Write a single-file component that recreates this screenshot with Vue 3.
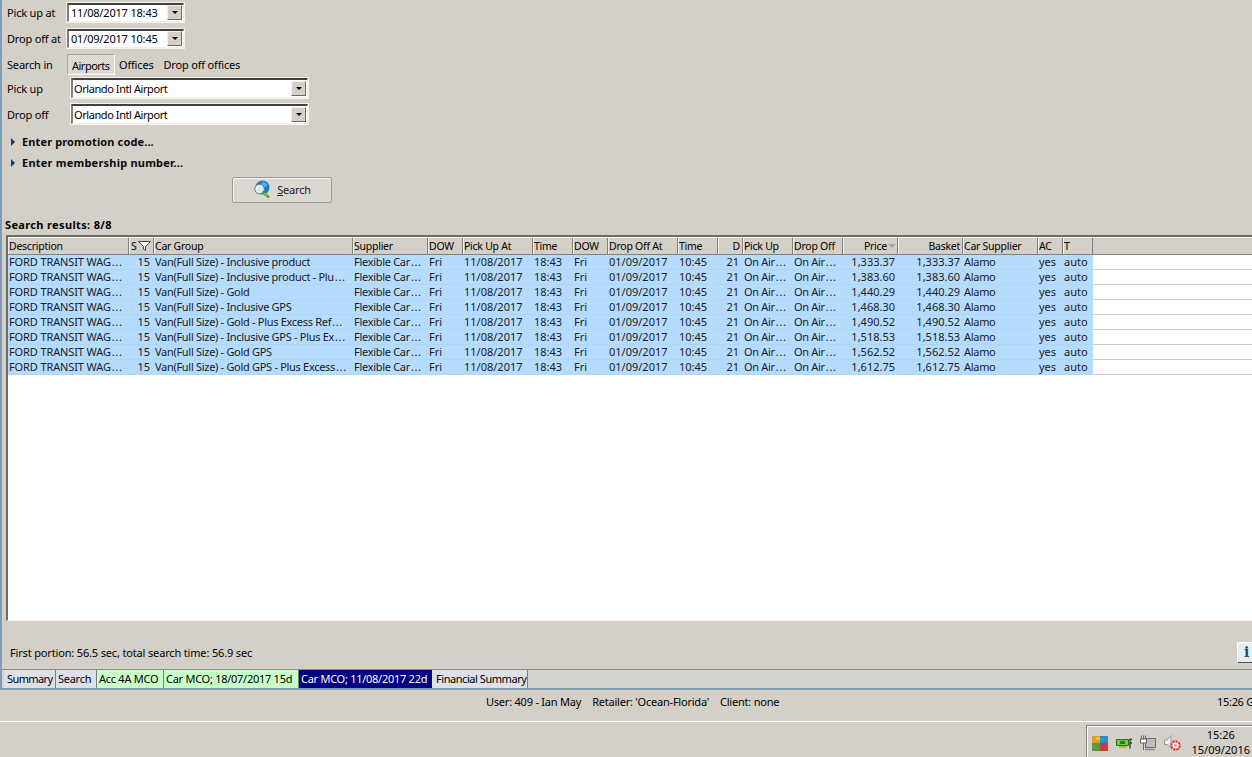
<script setup>
const columns = [
  { name: 'Description', width: 121, first: true },
  { name: 'S', width: 25, right: true, wide: true, filter: true },
  { name: 'Car Group', width: 199, tight: true },
  { name: 'Supplier', width: 75, tight: true },
  { name: 'DOW', width: 35 },
  { name: 'Pick Up At', width: 70 },
  { name: 'Time', width: 40 },
  { name: 'DOW', width: 35 },
  { name: 'Drop Off At', width: 70 },
  { name: 'Time', width: 40 },
  { name: 'D', width: 25, right: true, wide: true },
  { name: 'Pick Up', width: 50, tight: true },
  { name: 'Drop Off', width: 50, tight: true },
  { name: 'Price', width: 55, right: true, sort: true },
  { name: 'Basket', width: 65, right: true },
  { name: 'Car Supplier', width: 75, tight: true },
  { name: 'AC', width: 25 },
  { name: 'T', width: 30 }
]
const gridTemplate = columns.map(c => c.width + 'px').join(' ')
const rowData = [
  ['Inclusive product', '1,333.37'],
  ['Inclusive product - Plu…', '1,383.60'],
  ['Gold', '1,440.29'],
  ['Inclusive GPS', '1,468.30'],
  ['Gold - Plus Excess Ref…', '1,490.52'],
  ['Inclusive GPS - Plus Ex…', '1,518.53'],
  ['Gold GPS', '1,562.52'],
  ['Gold GPS - Plus Excess…', '1,612.75']
]
const rows = rowData.map(([group, price]) => [
  'FORD TRANSIT WAG…', '15', 'Van(Full Size) - ' + group, 'Flexible Car…', 'Fri', '11/08/2017', '18:43',
  'Fri', '01/09/2017', '10:45', '21', 'On Air…', 'On Air…', price, price, 'Alamo', 'yes', 'auto'
])
const tabs = [
  { label: 'Summary', kind: 'plain', width: 52 },
  { label: 'Search', kind: 'plain', width: 41 },
  { label: 'Acc 4A MCO', kind: 'green', width: 67 },
  { label: 'Car MCO; 18/07/2017 15d', kind: 'green', width: 135 },
  { label: 'Car MCO; 11/08/2017 22d', kind: 'active', width: 133 },
  { label: 'Financial Summary', kind: 'plain', width: 96 }
]
</script>

<template>
  <div class="screen">
    <div class="window">
      <div class="form">
        <div class="form-row date-row first">
          <span class="label">Pick up at</span>
          <div class="field date"><span>11/08/2017 18:43</span><i class="arrow-btn"></i></div>
        </div>
        <div class="form-row date-row">
          <span class="label">Drop off at</span>
          <div class="field date"><span>01/09/2017 10:45</span><i class="arrow-btn"></i></div>
        </div>
        <div class="form-row search-in">
          <span class="label">Search in</span>
          <span class="seg on">Airports</span>
          <span class="seg">Offices</span>
          <span class="seg">Drop off offices</span>
        </div>
        <div class="form-row combo-row">
          <span class="label short">Pick up</span>
          <div class="field combo"><span>Orlando Intl Airport</span><i class="arrow-btn"></i></div>
        </div>
        <div class="form-row combo-row">
          <span class="label short">Drop off</span>
          <div class="field combo"><span>Orlando Intl Airport</span><i class="arrow-btn"></i></div>
        </div>
        <div class="expander e1"><i class="tri"></i>Enter promotion code...</div>
        <div class="expander e2"><i class="tri"></i>Enter membership number...</div>
        <button class="search-btn">
          <svg width="18" height="18" viewBox="0 0 18 18">
            <circle cx="9.5" cy="7.5" r="7" fill="#1c7cc6" />
            <path d="M9 1.5c2 1 4 .5 5 2.5s-1 3-3 3-2-3-2-5.5z" fill="#55aee0" />
            <circle cx="6.5" cy="9" r="4.8" fill="#d4edf6" stroke="#4f7f9f" />
            <path d="M3.5 9a3 3 0 0 1 3-3" stroke="#fff" fill="none" />
            <path d="M10.5 12.5l4.5 4" stroke="#4f9a2c" stroke-width="2.8" stroke-linecap="round" />
            <path d="M11.5 13l3 3" stroke="#e8d04a" stroke-width="1" />
          </svg>
          <span><u>S</u>earch</span>
        </button>
      </div>

      <div class="results-title">Search results: 8/8</div>

      <div class="table">
        <div class="thead" :style="{ gridTemplateColumns: gridTemplate }">
          <div v-for="(c, i) in columns" :key="i" class="th" :class="{ right: c.right && !c.filter, wide: c.wide }">
            <span>{{ c.name }}</span>
            <svg v-if="c.filter" class="funnel" width="13" height="10" viewBox="0 0 13 10">
              <path d="M.5.5h12L7.5 5.5v4l-2-1.5V5.5z" fill="#fff" stroke="#444" />
            </svg>
            <i v-if="c.sort" class="sort"></i>
          </div>
        </div>
        <div class="tbody">
          <div v-for="(r, ri) in rows" :key="ri" class="row">
            <div class="cells" :style="{ gridTemplateColumns: gridTemplate }">
              <div
                v-for="(v, ci) in r"
                :key="ci"
                class="td"
                :class="{ right: columns[ci].right, wide: columns[ci].wide, tight: columns[ci].tight, first: columns[ci].first }"
              >{{ v.replace('…', '') }}<span v-if="v.endsWith('…')" class="dots">...</span></div>
            </div>
          </div>
        </div>
      </div>

      <div class="status">
        <span>First portion: 56.5 sec, total search time: 56.9 sec</span>
        <div class="info-btn">i</div>
      </div>

      <div class="tabs">
        <div v-for="t in tabs" :key="t.label" class="tab" :class="t.kind" :style="{ width: t.width + 'px' }">{{ t.label }}</div>
      </div>
    </div>

    <div class="userbar">
      <div class="userinfo">
        <span>User: 409 - Ian May</span>
        <span>Retailer: 'Ocean-Florida'</span>
        <span>Client: none</span>
      </div>
      <span class="gmt">15:26 G</span>
    </div>

    <div class="taskbar">
      <div class="tray">
        <div class="tray-icons">
          <svg width="16" height="15" viewBox="0 0 16 15">
            <rect width="8" height="7" fill="#e59a2a" />
            <rect x="4" y="1" width="4" height="3" fill="#e8c83a" />
            <rect x="8" width="8" height="7" fill="#2f86c8" />
            <rect x="8" y="2" width="4" height="3" fill="#36a0b8" />
            <rect y="7" width="8" height="8" fill="#48a040" />
            <rect x="3" y="10" width="3" height="3" fill="#a08030" />
            <rect x="8" y="7" width="8" height="8" fill="#d23c2c" />
            <rect x="8" y="7" width="3" height="3" fill="#8a4a80" />
          </svg>
          <svg width="16" height="11" viewBox="0 0 16 11">
            <path d="M.5 1.5h12v6H.5z" fill="#6cd03a" stroke="#2c6c22" />
            <path d="M3 8h8v2H3z" fill="#b4b83a" />
            <path d="M4 3h5v3H4z" fill="#2a7a22" />
            <path d="M14 .5v10M14 1.5h2M14 5h2" stroke="#33382f" stroke-width="1.3" fill="none" />
          </svg>
          <svg width="16" height="16" viewBox="0 0 16 16">
            <rect x="5.5" y="3.5" width="10" height="9" fill="#bdbdbd" stroke="#6e6e6e" />
            <path d="M5 14.5h10" stroke="#8a8a8a" stroke-width="1.4" />
            <path d="M1.5 .5v4M5.5 .5v4" stroke="#666" fill="none" />
            <rect x=".5" y="4" width="6" height="4" fill="#fff" stroke="#666" />
            <path d="M3.5 8v7" stroke="#666" />
            <path d="M3.5 .5v4" stroke="#666" />
          </svg>
          <svg width="17" height="16" viewBox="0 0 17 16">
            <path d="M.5 5h2.5l4-4.5v12L3 9.5H.5z" fill="#eeeeee" stroke="#9a9a9a" />
            <circle cx="11.5" cy="10.5" r="4.2" fill="#fff" stroke="#d8343a" stroke-width="2.2" stroke-dasharray="2.4 .8" />
            <circle cx="11.5" cy="10.5" r="1.4" fill="#e88a8a" />
          </svg>
        </div>
        <div class="clock"><span>15:26</span><span>15/09/2016</span></div>
      </div>
    </div>
  </div>
</template>

<style>
html, body { margin: 0; padding: 0; background: #d4d0c8; overflow: hidden; }
</style>

<style scoped>
.screen {
  width: 1252px;
  height: 757px;
  background: #d4d0c8;
  color: #000;
  font-family: "Noto Sans", "DejaVu Sans", sans-serif;
  font-size: 11px;
  line-height: 13px;
  overflow: hidden;
  display: flex;
  flex-direction: column;
}
.window {
  height: 690px;
  flex: none;
  box-sizing: border-box;
  border-left: 2px solid #7f9db9;
  border-bottom: 2px solid #7f9db9;
  display: flex;
  flex-direction: column;
}
.form { height: 214px; box-sizing: border-box; padding-left: 5px; position: relative; letter-spacing: -0.18px; }
.form-row { display: flex; align-items: center; }
.label { width: 60px; flex: none; }
.label.short { width: 64px; }
.date-row { height: 22px; margin-bottom: 4px; }
.date-row.first { margin-top: 1px; }
.field {
  box-sizing: border-box;
  background: #fff;
  border-top: 2px solid #404040;
  border-left: 2px solid #808080;
  border-right: 1px solid #f0eee8;
  border-bottom: 1px solid #f0eee8;
  outline: 1px solid #f4f2ec;
  display: flex;
  align-items: center;
  justify-content: space-between;
  white-space: nowrap;
}
.date { width: 117px; height: 19px; padding: 0 1px 0 2px; }
.combo { width: 237px; height: 20px; padding: 0 1px 0 1px; letter-spacing: -0.42px; }
.arrow-btn {
  width: 15px;
  height: 15px;
  box-sizing: border-box;
  background: #d4d0c8;
  border: 1px solid #f4f2ec;
  border-right-color: #6a6a6a;
  border-bottom-color: #6a6a6a;
  display: flex;
  align-items: center;
  justify-content: center;
}
.arrow-btn::after {
  content: "";
  border-left: 3px solid transparent;
  border-right: 3px solid transparent;
  border-top: 3px solid #000;
}
.search-in { height: 24px; margin-top: -1px; }
.seg { height: 21px; line-height: 22px; padding: 0 6px 0 4px; box-sizing: border-box; white-space: nowrap; }
.seg.on {
  width: 48px;
  border: 1px solid #fff;
  border-top-color: #a8a8a0;
  border-left-color: #a8a8a0;
  background: repeating-conic-gradient(#e6e3dc 0 25%, #d4d0c8 0 50%) 0 0 / 2px 2px;
  padding: 0 4px;
  letter-spacing: -0.5px;
}
.combo-row { height: 24px; margin-bottom: 2px; }
.expander {
  font-weight: 700;
  position: absolute;
  left: 9px;
  display: flex;
  align-items: center;
  gap: 7px;
  color: #0a0a0a;
  letter-spacing: 0.22px;
}
.e1 { top: 135px; letter-spacing: 0.13px; }
.e2 { top: 156px; }
.tri {
  border-top: 4px solid transparent;
  border-bottom: 4px solid transparent;
  border-left: 4px solid #1c3a6b;
}
.search-btn {
  position: absolute;
  left: 230px;
  top: 177px;
  width: 100px;
  height: 26px;
  box-sizing: border-box;
  border: 1px solid #a09c94;
  border-radius: 2px;
  background: #dcd7d0;
  box-shadow: inset 1px 1px 0 #f4f2ee;
  display: flex;
  align-items: center;
  justify-content: center;
  gap: 6px;
  font: inherit;
  letter-spacing: -0.18px;
  color: #222;
  padding: 0 0 2px 0;
}
.results-title {
  font-weight: 700;
  padding: 4px 0 0 3px;
  height: 21px;
  box-sizing: border-box;
  letter-spacing: 0.35px;
}
.table {
  margin-left: 4px;
  height: 386px;
  flex: none;
  box-sizing: border-box;
  background: #fff;
  border-top: 2px solid #6f6c66;
  border-left: 2px solid #6f6c66;
  border-bottom: 1px solid #f4f2ec;
  display: flex;
  flex-direction: column;
}
.thead {
  display: grid;
  height: 17px;
  flex: none;
  background: #d4d0c8;
  border-bottom: 1px solid #808080;
  box-sizing: border-box;
  margin-top: 1px;
}
.th {
  position: relative;
  box-sizing: border-box;
  padding: 0 1px;
  font-size: 10.5px;
  letter-spacing: -0.25px;
  line-height: 16px;
  border-right: 1px solid #808080;
  box-shadow: inset 1px 0 0 #f4f2ec;
  white-space: nowrap;
  overflow: hidden;
}
.th.right { text-align: right; padding-right: 2px; }
.th.wide { padding-right: 2px; }
.th:nth-child(2) { padding-left: 2px; }
.funnel { position: absolute; right: 2px; top: 3px; }
.sort {
  position: absolute;
  right: 1px;
  top: 6px;
  border-left: 4px solid transparent;
  border-right: 4px solid transparent;
  border-top: 4px solid #a8a6a0;
}
.th:nth-child(14) { padding-right: 10px; }
.tbody { flex: none; }
.row {
  height: 15px;
  box-sizing: border-box;
  border-bottom: 1px solid #cfcdc8;
}
.cells {
  display: grid;
  background: #b5dcff;
  width: 1085px;
  height: 15px;
  box-sizing: border-box;
  border-bottom: 1px solid #add6f8;
}
.td {
  padding: 0 1px;
  line-height: 14px;
  white-space: nowrap;
  overflow: hidden;
  color: #1a1a1a;
}
.td.first { letter-spacing: -0.12px; }
.td.tight { letter-spacing: -0.3px; }
.td.right { text-align: right; padding-right: 3px; }
.td.wide { padding-right: 4px; }
.dots { letter-spacing: 0.6px; margin-left: 1px; }
.status {
  flex: 1;
  position: relative;
  padding: 25px 0 0 8px;
  box-sizing: border-box;
  border-bottom: 1px solid #8c8a84;
  letter-spacing: -0.16px;
}
.info-btn {
  position: absolute;
  right: -1px;
  top: 21px;
  width: 16px;
  height: 21px;
  box-sizing: border-box;
  background: #e8edf2;
  border: 1px solid #fff;
  border-bottom: 1px solid #555;
  border-right: none;
  font: 700 14px/19px "DejaVu Serif", serif;
  color: #1c4f7c;
  padding-left: 6px;
}
.tabs {
  height: 18px;
  display: flex;
  flex: none;
  padding-left: 2px;
  background: #d6d4ce;
  letter-spacing: -0.27px;
}
.tab {
  box-sizing: border-box;
  height: 18px;
  line-height: 17px;
  padding-left: 2px;
  white-space: nowrap;
  border-right: 1px solid #808080;
  overflow: hidden;
}
.tab:first-child { padding-left: 3px; letter-spacing: -0.6px; }
.tab:last-child { padding-left: 4px; letter-spacing: -0.45px; }
.tab.plain { background: #dde0e6; }
.tab.green { background: #c8ffc8; }
.tab.active { background: #000080; color: #fff; border-right: none; }
.userbar {
  height: 32px;
  flex: none;
  box-sizing: border-box;
  border-bottom: 1px solid #fff;
  position: relative;
  display: flex;
  align-items: center;
  padding-bottom: 9px;
  padding-left: 1217px;
}
.userinfo {
  position: absolute;
  left: 486px;
  top: 5px;
  display: flex;
  gap: 11px;
  letter-spacing: -0.22px;
}
.gmt { white-space: nowrap; letter-spacing: -0.3px; flex: none; }
.taskbar { height: 35px; flex: none; display: flex; justify-content: flex-end; padding-top: 3px; box-sizing: border-box; }
.tray {
  width: 166px;
  height: 32px;
  box-sizing: border-box;
  border-top: 1px solid #808080;
  border-left: 1px solid #808080;
  box-shadow: inset 1px 1px 0 #fff;
  display: flex;
  align-items: flex-start;
  padding: 9px 2px 0 5px;
}
.tray-icons { display: flex; align-items: center; gap: 8px; }
.clock {
  margin-left: auto;
  display: flex;
  flex-direction: column;
  align-items: center;
  gap: 3px;
  margin-top: -6px;
  line-height: 12px;
}
</style>
